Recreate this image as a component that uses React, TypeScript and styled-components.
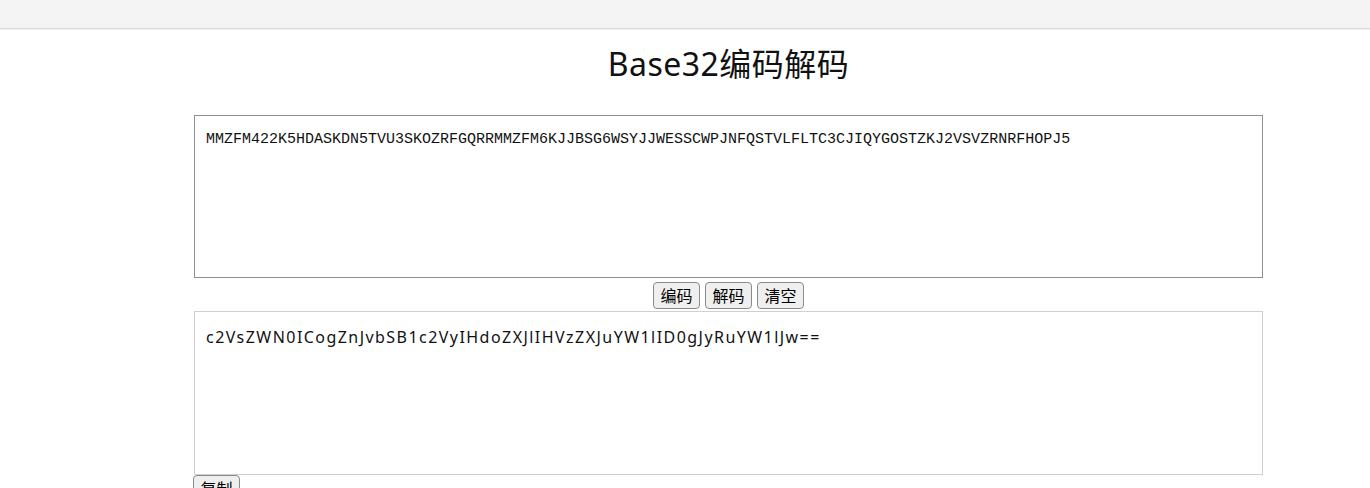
import React from "react";
import styled, { createGlobalStyle } from "styled-components";

const Global = createGlobalStyle`
  html, body { margin: 0; padding: 0; background: #fff; }
  body { font-family: "Noto Sans", "Noto Sans CJK SC", sans-serif; color: #111; }
`;

const TopBar = styled.div`
  height: 28px;
  background: #f4f4f4;
  border-bottom: 1px solid #d8d8d8;
  box-shadow: 0 1px 1px rgba(0,0,0,0.05);
`;

const Container = styled.div`
  margin-left: 194px;
  width: 1069px;
`;

const Title = styled.h1`
  margin: 0;
  padding-top: 13px;
  height: 86px;
  box-sizing: border-box;
  text-align: center;
  font-size: 32px;
  font-weight: 400;
  letter-spacing: 0.5px;
  line-height: 44px;
  font-family: "Noto Sans", "Noto Sans CJK SC", sans-serif;
  color: #111;
`;

const Area = styled.textarea<{ $mono?: boolean; $dark?: boolean; $h: number }>`
  display: block;
  box-sizing: border-box;
  width: 1069px;
  height: ${(p) => p.$h}px;
  margin: 0;
  resize: none;
  outline: none;
  border: 1px solid ${(p) => (p.$dark ? "#8f8f8f" : "#cfcfcf")};
  padding: ${(p) => (p.$mono ? "15px 11px" : "14px 11px")};
  font-family: ${(p) =>
    p.$mono ? `"Liberation Mono", monospace` : `"Noto Sans", "Noto Sans CJK SC", sans-serif`};
  font-size: ${(p) => (p.$mono ? "15px" : "16px")};
  letter-spacing: ${(p) => (p.$mono ? "0" : "1.45px")};
  line-height: ${(p) => (p.$mono ? "17px" : "22px")};
  color: #111;
  background: #fff;
  overflow: hidden;
`;

const ButtonRow = styled.div`
  display: flex;
  justify-content: center;
  gap: 5px;
  padding: 4px 0 2px;
  height: 33px;
  box-sizing: border-box;
`;

const Btn = styled.button`
  box-sizing: border-box;
  width: 47px;
  height: 27px;
  padding: 0;
  margin: 0;
  font-family: "Noto Sans CJK SC", sans-serif;
  font-size: 16px;
  line-height: 25px;
  color: #000;
  background: #efefef;
  border: 1px solid #8a8a8a;
  border-radius: 4px;
  cursor: pointer;
`;

const CopyRow = styled.div`
  margin-left: -1px;
`;

export default function App() {
  return (
    <>
      <Global />
      <TopBar />
      <Container>
        <Title>Base32编码解码</Title>
        <Area
          $mono
          $dark
          $h={163}
          defaultValue="MMZFM422K5HDASKDN5TVU3SKOZRFGQRRMMZFM6KJJBSG6WSYJJWESSCWPJNFQSTVLFLTC3CJIQYGOSTZKJ2VSVZRNRFHOPJ5"
        />
        <ButtonRow>
          <Btn>编码</Btn>
          <Btn>解码</Btn>
          <Btn>清空</Btn>
        </ButtonRow>
        <Area
          $h={164}
          defaultValue="c2VsZWN0ICogZnJvbSB1c2VyIHdoZXJlIHVzZXJuYW1lID0gJyRuYW1lJw=="
        />
        <CopyRow>
          <Btn>复制</Btn>
        </CopyRow>
      </Container>
    </>
  );
}
